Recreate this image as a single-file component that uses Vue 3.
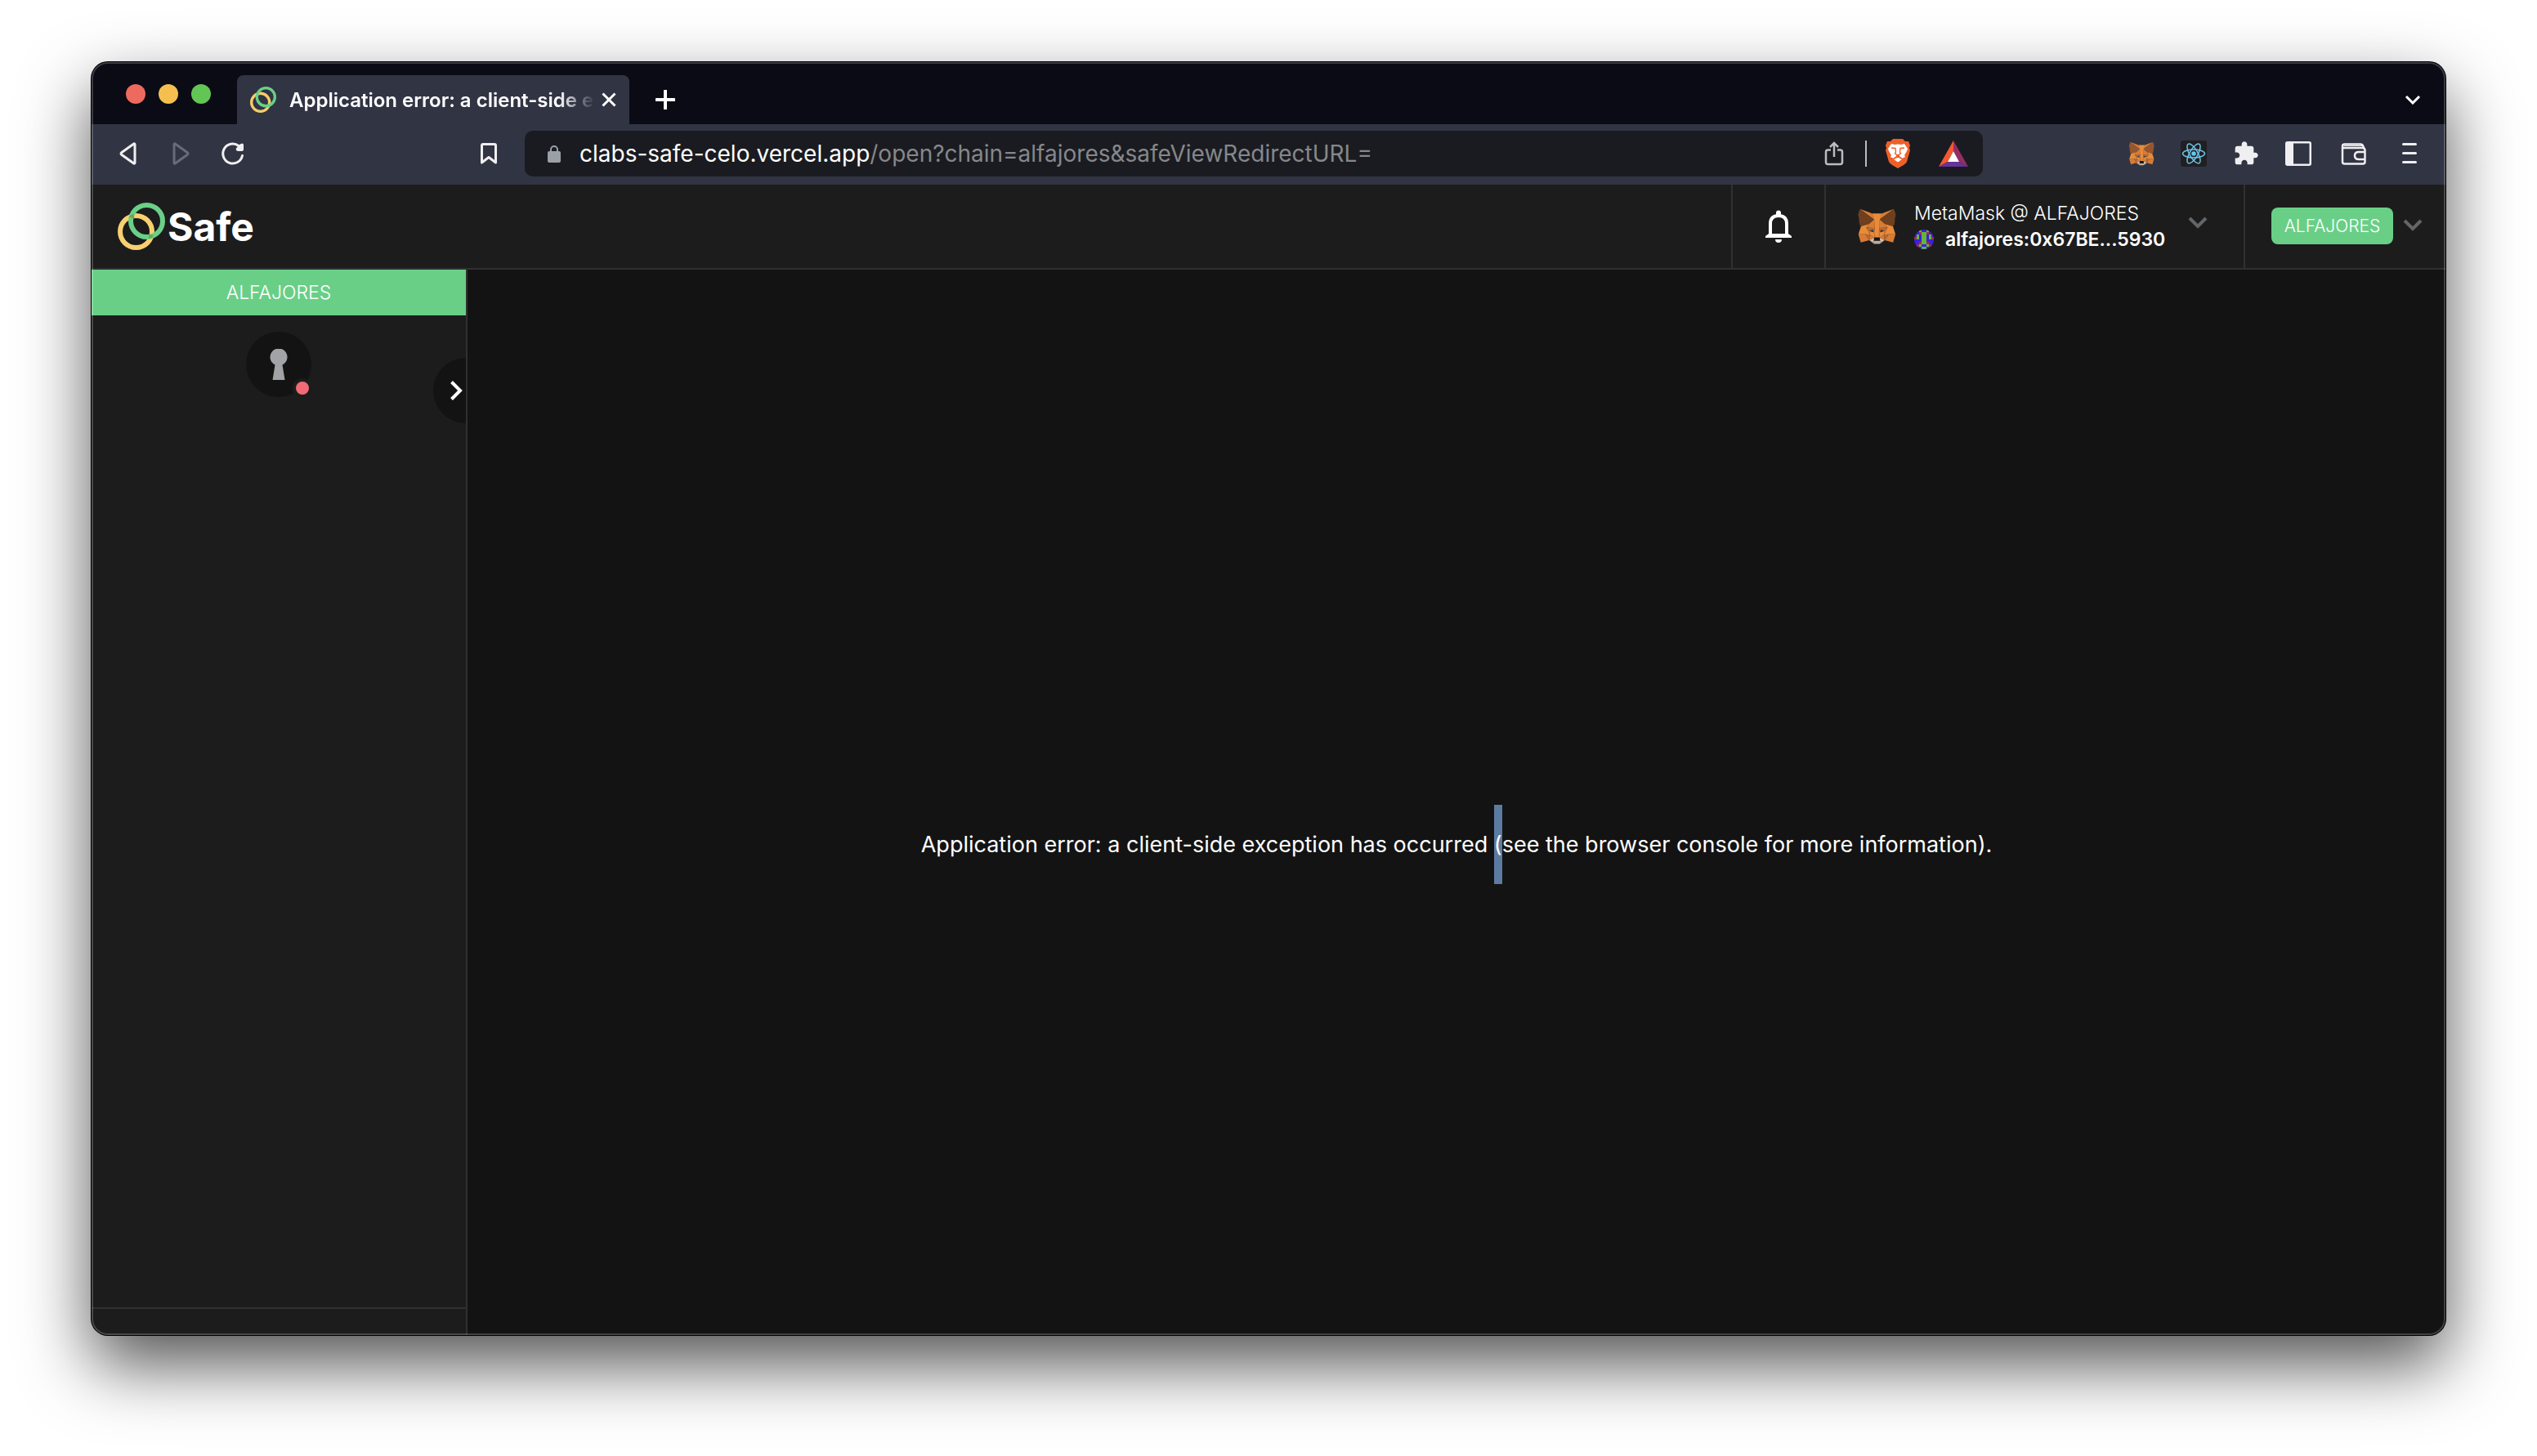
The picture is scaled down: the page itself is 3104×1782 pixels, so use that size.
<template>
  <div class="desktop">
    <div class="window">
      <!-- Tab strip -->
      <div class="tab-strip">
        <div class="lights">
          <span class="light red"></span>
          <span class="light yellow"></span>
          <span class="light green"></span>
        </div>
        <div class="tab">
          <svg class="favicon" viewBox="0 0 58 58">
            <circle cx="23" cy="35" r="20" fill="none" stroke="#f5cd6b" stroke-width="6" />
            <circle cx="35" cy="23" r="20" fill="none" stroke="#6acf87" stroke-width="6" />
          </svg>
          <span class="tab-title">{{ tabTitle }}</span>
          <button class="icon-btn" aria-label="Close tab">
            <svg width="18" height="18" viewBox="0 0 18 18"><path d="M1.500 1.500L16.500 16.500M16.500 1.500L1.500 16.500" stroke="#fff" stroke-width="3" /></svg>
          </button>
        </div>
        <button class="icon-btn new-tab" aria-label="New tab">
          <svg width="24" height="24" viewBox="0 0 24 24"><path d="M12 1V23M1 12H23" stroke="#fff" stroke-width="4" stroke-linecap="round" /></svg>
        </button>
        <button class="icon-btn tab-search" aria-label="Search tabs">
          <svg width="20" height="12" viewBox="0 0 20 12"><path d="M2 2L10 10L18 2" fill="none" stroke="#fff" stroke-width="3" /></svg>
        </button>
      </div>

      <!-- Toolbar -->
      <div class="toolbar">
        <div class="nav">
          <button class="icon-btn" aria-label="Back">
            <svg width="32" height="32" viewBox="0 0 32 32"><path d="M24 5V27Q24 29 22 27.500L8 17.500Q6 16 8 14.500L22 4.500Q24 3 24 5Z" fill="none" stroke="#efeff1" stroke-width="3" /></svg>
          </button>
          <button class="icon-btn" aria-label="Forward" disabled>
            <svg width="32" height="32" viewBox="0 0 32 32"><path d="M8 5V27Q8 29 10 27.500L24 17.500Q26 16 24 14.500L10 4.500Q8 3 8 5Z" fill="none" stroke="#696b76" stroke-width="3" /></svg>
          </button>
          <button class="icon-btn" aria-label="Reload">
            <svg width="32" height="32" viewBox="0 0 32 32">
              <path d="M27.500 18.500A12 12 0 1 1 23 6.500" fill="none" stroke="#efeff1" stroke-width="3" stroke-linecap="round" />
              <path d="M29 5V11Q29 13 27 13H22Q19 12 20 9.500L24 5Q28 2 29 5Z" fill="#efeff1" />
            </svg>
          </button>
        </div>
        <button class="icon-btn bookmark" aria-label="Bookmark">
          <svg width="24" height="28" viewBox="0 0 24 28"><path d="M5 2.500H19Q20.500 2.500 20.500 4V25L12 18.500L3.500 25V4Q3.500 2.500 5 2.500Z" fill="none" stroke="#efeff1" stroke-width="3" stroke-linejoin="round" /></svg>
        </button>
        <div class="address">
          <svg class="lock" width="18" height="22" viewBox="0 0 18 22">
            <rect x="1" y="8" width="16" height="14" rx="2" fill="#9aa0a6" />
            <path d="M5 9V6A4 4 0 0 1 13 6V9" fill="none" stroke="#9aa0a6" stroke-width="2" />
          </svg>
          <div class="url"><span class="host">clabs-safe-celo.vercel.app</span>/open?chain=alfajores&amp;safeViewRedirectURL=</div>
          <button class="icon-btn" aria-label="Share">
            <svg width="24" height="32" viewBox="0 0 24 32">
              <path d="M8 11.500H4.500Q2 11.500 2 14V26.500Q2 29 4.500 29H19.500Q22 29 22 26.500V14Q22 11.500 19.500 11.500H16" fill="none" stroke="#bcbcbe" stroke-width="2.500" />
              <path d="M12 20V3M7 8L12 3L17 8" fill="none" stroke="#bcbcbe" stroke-width="2.500" />
            </svg>
          </button>
          <span class="rule"></span>
          <button class="icon-btn" aria-label="Brave Shields">
            <svg width="32" height="36" viewBox="0 0 32 36">
              <path d="M10 0H22L25 3L29 3L31 8L30 11L31 14L27 28Q26 30 23 32L16 36L9 32Q6 30 5 28L1 14L2 11L1 8L3 3L7 3Z" fill="#ee6027" />
              <path d="M8 6L12 7L16 6.500L20 7L24 6L28 12L27 15L24 20L25 22L21 24L18 21V20L16 19.500L14 20V21L11 24L7 22L8 20L5 15L4 12Z" fill="#fff" />
              <path d="M16 22.500L21 25L16 28.500L11 25Z" fill="#fff" />
              <path d="M8 11L13 11.500L13.500 16L12.500 18L16 20L19.500 18L18.500 16L19 11.500L24 11M16 19V23M11 24L16 21.500L21 24" fill="none" stroke="#ee6027" stroke-width="1.400" />
            </svg>
          </button>
          <button class="icon-btn" aria-label="Brave Rewards">
            <svg width="36" height="32" viewBox="0 0 36 32">
              <path d="M18 0L0 32L11 26L18 13Z" fill="#f4592f" />
              <path d="M18 0L36 32L25 26L18 13Z" fill="#952d65" />
              <path d="M0 32H36L25 26H11Z" fill="#653496" />
              <path d="M18 13L25 26H11Z" fill="#fff" />
            </svg>
          </button>
        </div>
        <div class="extensions">
          <button class="icon-btn" aria-label="MetaMask">
            <svg class="fox small" width="32" height="32" viewBox="0 0 35 33">
              <path v-for="(p, i) in fox" :key="i" :d="p.d" :class="p.c" />
            </svg>
          </button>
          <button class="icon-btn" aria-label="React Developer Tools">
            <svg width="32" height="32" viewBox="0 0 32 32">
              <rect width="32" height="32" rx="3" fill="#202022" />
              <g fill="none" stroke="#6bc5ea" stroke-width="1.500">
                <ellipse cx="16" cy="16" rx="13.500" ry="5" />
                <ellipse cx="16" cy="16" rx="13.500" ry="5" transform="rotate(60 16 16)" />
                <ellipse cx="16" cy="16" rx="13.500" ry="5" transform="rotate(120 16 16)" />
              </g>
              <circle cx="16" cy="16" r="2.800" fill="#6bc5ea" />
            </svg>
          </button>
          <button class="icon-btn" aria-label="Extensions">
            <svg width="32" height="32" viewBox="0 0 24 24"><path d="M20.500 11H19V7c0-1.100-.9-2-2-2h-4V3.500C13 2.120 11.880 1 10.500 1S8 2.120 8 3.500V5H4c-1.100 0-1.990.9-1.990 2v3.800H3.500c1.490 0 2.700 1.210 2.700 2.700s-1.210 2.700-2.700 2.700H2V20c0 1.100.9 2 2 2h3.800v-1.500c0-1.490 1.210-2.700 2.700-2.700s2.700 1.210 2.700 2.700V22H17c1.100 0 2-.9 2-2v-4h1.500c1.380 0 2.500-1.120 2.500-2.500S21.880 11 20.500 11z" fill="#efeff1" /></svg>
          </button>
          <button class="icon-btn" aria-label="Sidebar">
            <svg width="32" height="32" viewBox="0 0 32 32">
              <rect x="1.250" y="2.250" width="29.500" height="27.500" rx="1.500" fill="none" stroke="#efeff1" stroke-width="2.500" />
              <rect x="1" y="2" width="9" height="28" fill="#efeff1" />
            </svg>
          </button>
          <button class="icon-btn wallet" aria-label="Wallet">
            <svg width="32" height="32" viewBox="0 0 32 32">
              <path d="M2 8V26Q2 28.500 4.500 28.500H27Q29.500 28.500 29.500 26V12Q29.500 9 26.500 9H4Q2 9 2 7Q2 4.500 4.500 4.500H24Q27 4.500 28 9" fill="none" stroke="#efeff1" stroke-width="2.500" />
              <path d="M4 6.500H26" stroke="#efeff1" stroke-width="1" />
              <path d="M30 14H22Q17 14 17 18.500Q17 23 22 23H30" fill="none" stroke="#efeff1" stroke-width="2.500" />
            </svg>
          </button>
          <button class="icon-btn" aria-label="Menu">
            <svg width="32" height="32" viewBox="0 0 32 32"><path d="M8.500 4.500H23.500M8.500 15.500H23.500M8.500 26.500H23.500" stroke="#efeff1" stroke-width="3" stroke-linecap="round" /></svg>
          </button>
        </div>
      </div>

      <!-- App header -->
      <header class="app-header">
        <a class="logo" href="#">
          <svg width="58" height="58" viewBox="0 0 58 58">
            <circle cx="22.500" cy="35.500" r="19.500" fill="none" stroke="#f8d070" stroke-width="6" />
            <circle cx="35.500" cy="22.500" r="19.500" fill="none" stroke="#6acf87" stroke-width="6" />
            <path d="M16.500 18.500Q17 17 20 16.500M41.500 39.500Q41 41 38 41.500" fill="none" stroke="#74a34c" stroke-width="5" />
          </svg>
          <span>Safe</span>
        </a>
        <button class="cell bell" aria-label="Notifications">
          <svg width="32" height="40" viewBox="0 0 32 40">
            <path d="M6 32V17Q6 7 16 7Q26 7 26 17V32" fill="none" stroke="#fff" stroke-width="4" />
            <path d="M13 6V3.500A3 3 0 0 1 19 3.500V6ZM0 34V32L4 29H28L32 32V34ZM12 36H20A4 4 0 0 1 12 36Z" fill="#fff" />
          </svg>
        </button>
        <button class="cell account">
          <svg class="fox" width="48" height="48" viewBox="0 0 35 33">
            <path v-for="(p, i) in fox" :key="i" :d="p.d" :class="p.c" />
          </svg>
          <span class="account-text">
            <span class="wallet-name">MetaMask @ ALFAJORES</span>
            <span class="wallet-address">
              <svg class="avatar" width="24" height="24" viewBox="0 0 8 8" shape-rendering="crispEdges">
                <rect width="8" height="8" fill="#3a20e0" />
                <rect v-for="(b, i) in blocks" :key="i" :x="b.x" :y="b.y" width="1" height="1" :fill="b.fill" />
              </svg>
              <b>alfajores:0x67BE...5930</b>
            </span>
          </span>
          <svg class="chevron" width="24" height="16" viewBox="0 0 24 16"><path d="M2 2L12 12L22 2" fill="none" stroke="#636669" stroke-width="4" /></svg>
        </button>
        <button class="cell network">
          <span class="badge">ALFAJORES</span>
          <svg class="chevron" width="24" height="16" viewBox="0 0 24 16"><path d="M2 2L12 12L22 2" fill="none" stroke="#636669" stroke-width="4" /></svg>
        </button>
      </header>

      <!-- App body -->
      <div class="app-body">
        <aside class="sidebar">
          <div class="network-bar">ALFAJORES</div>
          <div class="safe-icon">
            <svg width="22" height="38" viewBox="0 0 22 38"><path d="M6.500 19.500A10.500 10.500 0 1 1 15.500 19.500L18.500 38H3.500Z" fill="#a1a3a7" /></svg>
            <span class="status-dot"></span>
          </div>
          <button class="toggle" aria-label="Open sidebar">
            <svg width="16" height="26" viewBox="0 0 16 26"><path d="M2.500 2.500L13 13L2.500 23.500" fill="none" stroke="#fff" stroke-width="4" /></svg>
          </button>
          <div class="sidebar-footer"></div>
        </aside>
        <main class="content">
          <h2>Application error: a client-side exception has occurred <mark>(</mark>see the browser console for more information).</h2>
        </main>
      </div>
    </div>
  </div>
</template>

<script setup>
import { ref } from 'vue'

const tabTitle = ref('Application error: a client-side e')

const fox = [
  { c: 'side', d: 'M32.958 1L19.824 10.718L22.266 4.991Z' },
  { c: 'side', d: 'M2.663 1L15.680 10.809L13.354 4.991Z' },
  { c: 'side', d: 'M28.229 23.533L24.735 28.872L32.219 30.932L34.364 23.650Z' },
  { c: 'side', d: 'M1.273 23.650L3.404 30.932L10.876 28.872L7.394 23.533Z' },
  { c: 'side', d: 'M10.471 14.515L8.392 17.651L15.800 17.988L15.556 9.998Z' },
  { c: 'side', d: 'M25.150 14.515L19.987 9.907L19.824 17.988L27.229 17.651Z' },
  { c: 'side', d: 'M10.873 28.872L15.356 26.708L11.497 23.704Z' },
  { c: 'side', d: 'M20.266 26.708L24.735 28.872L24.124 23.704Z' },
  { c: 'chin', d: 'M24.735 28.872L20.266 26.708L20.630 29.610L20.591 30.841Z' },
  { c: 'chin', d: 'M10.873 28.872L15.030 30.841L15.004 29.610L15.356 26.708Z' },
  { c: 'shade', d: 'M10.873 28.872L11.523 23.533L7.394 23.650Z' },
  { c: 'shade', d: 'M24.098 23.533L24.735 28.872L28.229 23.650Z' },
  { c: 'shade', d: 'M27.229 17.651L19.824 17.988L20.513 21.784L21.604 19.491L24.241 20.696Z' },
  { c: 'shade', d: 'M11.394 20.696L14.018 19.491L15.108 21.784L15.800 17.988L8.392 17.651Z' },
  { c: 'side', d: 'M8.392 17.651L11.497 23.704L11.394 20.696Z' },
  { c: 'side', d: 'M24.241 20.696L24.124 23.704L27.229 17.651Z' },
  { c: 'side', d: 'M15.800 17.988L15.108 21.784L15.979 26.268L16.173 20.360Z' },
  { c: 'side', d: 'M19.824 17.988L19.460 20.347L19.642 26.268L20.513 21.784Z' },
  { c: 'face', d: 'M20.513 21.784L19.642 26.268L20.266 26.708L24.124 23.704L24.241 20.696Z' },
  { c: 'face', d: 'M11.394 20.696L11.497 23.704L15.356 26.708L15.979 26.268L15.108 21.784Z' },
  { c: 'jaw', d: 'M20.591 30.841L20.630 29.610L20.292 29.325H15.329L15.004 29.610L15.030 30.841L10.873 28.872L12.328 30.064L15.277 32.099H20.331L23.293 30.064L24.735 28.872Z' },
  { c: 'nose', d: 'M20.266 26.708L19.642 26.268H15.979L15.356 26.708L15.004 29.610L15.329 29.325H20.292L20.630 29.610Z' },
  { c: 'ear', d: 'M33.517 11.353L34.621 5.990L32.958 1L20.266 10.394L25.150 14.515L32.049 16.523L33.569 14.748L32.906 14.269L33.959 13.310L33.153 12.688L34.205 11.885Z' },
  { c: 'ear', d: 'M1 5.990L2.117 11.353L1.402 11.885L2.467 12.688L1.662 13.310L2.714 14.269L2.052 14.748L3.572 16.523L10.471 14.515L15.355 10.394L2.663 1Z' },
  { c: 'face', d: 'M32.049 16.523L25.150 14.515L27.229 17.651L24.124 23.704L28.229 23.652H34.364Z' },
  { c: 'face', d: 'M10.471 14.515L3.572 16.523L1.273 23.652H7.394L11.497 23.704L8.392 17.651Z' },
  { c: 'face', d: 'M19.824 17.988L20.266 10.394L22.267 4.991H13.355L15.356 10.394L15.797 17.988L15.966 20.373L15.979 26.268H19.643L19.656 20.373Z' },
  { c: 'eye', d: 'M15.108 21.784L11.394 20.696L14.018 19.491Z' },
  { c: 'eye', d: 'M20.513 21.784L21.604 19.491L24.241 20.696Z' }
]

// g = green, r = red, . = background
const pattern = [
  '..g..g..',
  '..rggr..',
  '.g.gg.g.',
  'rg.gg.gr',
  '...gg...',
  '..rggr..',
  '.rg..gr.',
  '...gg...'
]
const blocks = pattern.flatMap((row, y) =>
  [...row]
    .map((ch, x) => ({ x, y, fill: ch === 'g' ? '#64b33c' : '#a3303f', ch }))
    .filter((b) => b.ch !== '.')
)
</script>

<style>
body {
  background: #fff;
}
</style>

<style scoped>
* {
  box-sizing: border-box;
}
.desktop {
  display: flex;
  min-height: 100vh;
  padding: 76px 112px 148px;
  font-family: Inter, "Liberation Sans", sans-serif;
  color: #fff;
}
.window {
  position: relative;
  display: flex;
  flex-direction: column;
  flex: 1;
  min-width: 0;
  border-radius: 20px;
  overflow: hidden;
  background: #131313;
  box-shadow: 0 0 0 1px #000, 0 36px 84px rgba(0, 0, 0, 0.68);
}
.window::after {
  content: "";
  position: absolute;
  inset: 0;
  border: 2px solid rgba(255, 255, 255, 0.2);
  border-radius: 20px;
  pointer-events: none;
}
svg {
  display: block;
  flex: none;
}
button {
  font: inherit;
  color: inherit;
  background: none;
  border: none;
  padding: 0;
  cursor: pointer;
}
.tab-strip {
  display: flex;
  height: 76px;
  background: #0b0b15;
}
.lights {
  display: flex;
  gap: 16px;
  width: 178px;
  padding: 27px 0 0 42px;
}
.light {
  width: 24px;
  height: 24px;
  border-radius: 50%;
}
.light.red {
  background: #ee6a5f;
}
.light.yellow {
  background: #f5bf4f;
}
.light.green {
  background: #62c655;
}
.tab {
  display: flex;
  align-items: center;
  width: 480px;
  height: 60px;
  margin-top: 16px;
  padding: 0 16px;
  border-radius: 8px 8px 0 0;
  background: #313443;
}
.favicon {
  width: 32px;
  height: 32px;
}
.tab-title {
  flex: 1;
  margin: 0 8px 0 16px;
  white-space: nowrap;
  font-size: 24px;
  font-weight: 600;
  mask-image: linear-gradient(90deg, #000 88%, transparent);
}
.new-tab {
  margin: 16px 0 0 32px;
}
.tab-search {
  margin: 16px 30px 0 auto;
}
.toolbar {
  display: flex;
  align-items: center;
  height: 74px;
  padding-bottom: 2px;
  background: #313443;
}
.nav {
  display: flex;
  gap: 32px;
  width: 474px;
  padding-left: 29px;
}
.bookmark {
  margin-right: 32px;
}
.address {
  display: flex;
  align-items: center;
  flex: 1;
  height: 56px;
  padding: 0 18px 0 27px;
  border-radius: 10px;
  background: #1a1b20;
}
.url {
  flex: 1;
  margin-left: 22px;
  font-size: 28px;
  color: #86878b;
}
.host {
  color: #fff;
}
.rule {
  width: 2px;
  height: 32px;
  margin: 0 22px 0 26px;
  background: #bcbcbe;
}
.address .icon-btn:last-child {
  margin-left: 34px;
}
.extensions {
  display: flex;
  gap: 32px;
  padding: 0 28px 0 178px;
}
.wallet {
  margin: 0 4px;
}
.fox .face {
  fill: #e88b3a;
}
.fox .side {
  fill: #d87c35;
}
.fox .shade {
  fill: #c0682f;
}
.fox .ear {
  fill: #6f401f;
}
.fox.small .ear {
  fill: #955730;
}
.fox .chin {
  fill: #d8c2b4;
}
.fox .jaw {
  fill: #c0ac9d;
}
.fox .eye {
  fill: #33475a;
}
.fox .nose {
  fill: #161616;
}
.app-header {
  display: flex;
  height: 104px;
  border-bottom: 2px solid #303030;
  background: #1c1c1c;
}
.logo {
  display: flex;
  align-items: center;
  gap: 3px;
  margin-right: auto;
  padding-left: 32px;
  font-size: 48px;
  font-weight: 700;
  color: #fff;
  text-decoration: none;
}
.cell {
  display: flex;
  align-items: center;
  border-left: 2px solid #303030;
}
.bell {
  width: 114px;
  justify-content: center;
}
.account {
  width: 513px;
  padding: 0 44px 0 38px;
}
.account-text {
  display: flex;
  flex-direction: column;
  margin-left: 22px;
  text-align: left;
  font-size: 23px;
  line-height: 32px;
  white-space: nowrap;
}
.wallet-name {
  font-weight: 300;
}
.wallet-address {
  display: flex;
  align-items: center;
  gap: 14px;
}
.wallet-address b {
  font-weight: 600;
}
.avatar {
  border-radius: 50%;
}
.account .chevron {
  margin: 0 0 8px auto;
}
.network {
  width: 247px;
  padding: 0 0 2px 32px;
  gap: 12px;
}
.badge {
  width: 149px;
  border-radius: 8px;
  background: #69cf86;
  font-size: 21px;
  font-weight: 300;
  line-height: 45px;
  text-align: center;
}
.app-body {
  display: flex;
  flex: 1;
}
.sidebar {
  position: relative;
  display: flex;
  flex-direction: column;
  align-items: center;
  width: 460px;
  border-right: 2px solid #303030;
  background: #1c1c1c;
  overflow: hidden;
}
.network-bar {
  width: 100%;
  background: #69cf86;
  font-size: 23px;
  font-weight: 300;
  line-height: 56px;
  text-align: center;
}
.safe-icon {
  position: relative;
  display: flex;
  align-items: center;
  justify-content: center;
  width: 80px;
  height: 80px;
  margin-top: 20px;
  border-radius: 50%;
  background: #131313;
}
.status-dot {
  position: absolute;
  right: -1px;
  bottom: -1px;
  width: 24px;
  height: 24px;
  border: 4px solid #1c1c1c;
  border-radius: 50%;
  background: #f06b76;
}
.toggle {
  position: absolute;
  top: 108px;
  right: -40px;
  width: 80px;
  height: 80px;
  padding-left: 20px;
  border-radius: 50%;
  background: #131313;
}
.sidebar-footer {
  width: 100%;
  height: 34px;
  margin-top: auto;
  border-top: 2px solid #303030;
}
.content {
  display: flex;
  align-items: center;
  justify-content: center;
  flex: 1;
  padding-top: 104px;
}
h2 {
  margin: 0;
  font-size: 27px;
  font-weight: 400;
  line-height: 98px;
}
mark {
  padding: 32px 0;
  color: #fff;
  background: #5c7ba1;
}
</style>
